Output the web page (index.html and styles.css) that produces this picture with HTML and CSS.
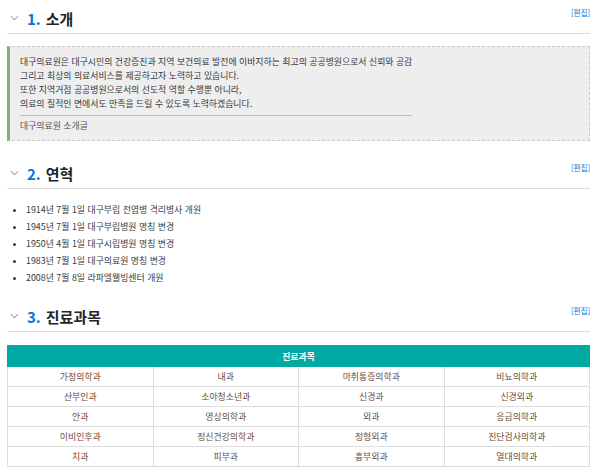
FILE: index.html
```html
<!DOCTYPE html>
<html lang="ko">
<head>
<meta charset="utf-8">
<title>대구의료원</title>
<link rel="stylesheet" href="styles.css">
</head>
<body>
<div class="page">
  <section class="sec sec-first">
    <h2 class="sec-head">
      <svg class="fold" viewBox="0 0 10 6" width="9" height="6"><path d="M1 1 L5 5 L9 1" fill="none" stroke="#777" stroke-width="1.1"/></svg>
      <span class="num">1.</span><span class="title">소개</span>
      <a class="edit" href="#">[편집]</a>
    </h2>
    <blockquote class="quote">
      <div class="quote-body">
        <p>대구의료원은 대구시민의 건강증진과 지역 보건의료 발전에 이바지하는 최고의 공공병원으로서 신뢰와 공감<br>그리고 최상의 의료서비스를 제공하고자 노력하고 있습니다.<br>또한 지역거점 공공병원으로서의 선도적 역할 수행뿐 아니라,<br>의료의 질적인 면에서도 만족을 드릴 수 있도록 노력하겠습니다.</p>
        <hr class="quote-rule">
        <p class="quote-src">대구의료원 소개글</p>
      </div>
    </blockquote>
  </section>

  <section class="sec">
    <h2 class="sec-head">
      <svg class="fold" viewBox="0 0 10 6" width="9" height="6"><path d="M1 1 L5 5 L9 1" fill="none" stroke="#777" stroke-width="1.1"/></svg>
      <span class="num">2.</span><span class="title">연혁</span>
      <a class="edit" href="#">[편집]</a>
    </h2>
    <ul class="history">
      <li>1914년 7월 1일 대구부립 전염병 격리병사 개원</li>
      <li>1945년 7월 1일 대구부립병원 명칭 변경</li>
      <li>1950년 4월 1일 대구시립병원 명칭 변경</li>
      <li>1983년 7월 1일 대구의료원 명칭 변경</li>
      <li>2008년 7월 8일 라파엘웰빙센터 개원</li>
    </ul>
  </section>

  <section class="sec">
    <h2 class="sec-head">
      <svg class="fold" viewBox="0 0 10 6" width="9" height="6"><path d="M1 1 L5 5 L9 1" fill="none" stroke="#777" stroke-width="1.1"/></svg>
      <span class="num">3.</span><span class="title">진료과목</span>
      <a class="edit" href="#">[편집]</a>
    </h2>
    <table class="depts">
      <thead>
        <tr><th colspan="4">진료과목</th></tr>
      </thead>
      <tbody>
        <tr><td>가정의학과</td><td>내과</td><td>마취통증의학과</td><td>비뇨의학과</td></tr>
        <tr><td>산부인과</td><td>소아청소년과</td><td>신경과</td><td>신경외과</td></tr>
        <tr><td>안과</td><td>영상의학과</td><td>외과</td><td>응급의학과</td></tr>
        <tr><td>이비인후과</td><td>정신건강의학과</td><td>정형외과</td><td>진단검사의학과</td></tr>
        <tr><td>치과</td><td>피부과</td><td>흉부외과</td><td>열대의학과</td></tr>
      </tbody>
    </table>
  </section>
</div>
</body>
</html>
```

FILE: styles.css
```css
html, body {
  margin: 0;
  padding: 0;
  background: #fff;
}

body {
  font-family: "Noto Sans CJK KR", "Noto Sans", sans-serif;
  color: #373a3c;
  font-size: 8.9px;
}

.page {
  padding: 3px 10px 0 7px;
}

.sec + .sec {
  margin-top: 17px;
}

.sec-head {
  display: flex;
  align-items: center;
  height: 30px;
  margin: 0;
  border-bottom: 1px solid #ddd;
  font-weight: 700;
  font-size: 15px;
  color: #212529;
}

.fold {
  margin: 0 8px 0 3px;
}

.num {
  color: #0275d8;
  margin-right: 5px;
}

.edit {
  margin-left: auto;
  align-self: flex-start;
  margin-top: 4px;
  font-size: 7.6px;
  font-weight: 400;
  color: #0275d8;
  text-decoration: none;
}

.quote {
  margin: 12px 0 0;
  padding: 8px 12px 7px 10px;
  background: #eee;
  border: 1px dashed #ccc;
  border-left: 3px solid #71bc6a;
}

.quote-body {
  display: inline-block;
}

.quote p {
  margin: 0;
  line-height: 14px;
}

.quote-rule {
  margin: 4px 0 3px;
  border: 0;
  border-top: 1px solid #bbb;
}

.quote-src {
  color: #555;
}

.history {
  margin: 14px 0 0;
  padding-left: 19px;
  list-style: disc;
}

.history li {
  line-height: 13px;
}

.history li + li {
  margin-top: 4px;
}

.depts {
  width: 100%;
  margin-top: 13px;
  border-collapse: collapse;
  table-layout: fixed;
}

.depts th {
  height: 20px;
  padding: 0;
  background: #00a9a1;
  color: #fff;
  font-weight: 700;
  border: 1px solid #00a9a1;
}

.depts td {
  height: 19px;
  padding: 0;
  text-align: center;
  color: #6e4b3a;
  border: 1px solid #ddd;
}
```
